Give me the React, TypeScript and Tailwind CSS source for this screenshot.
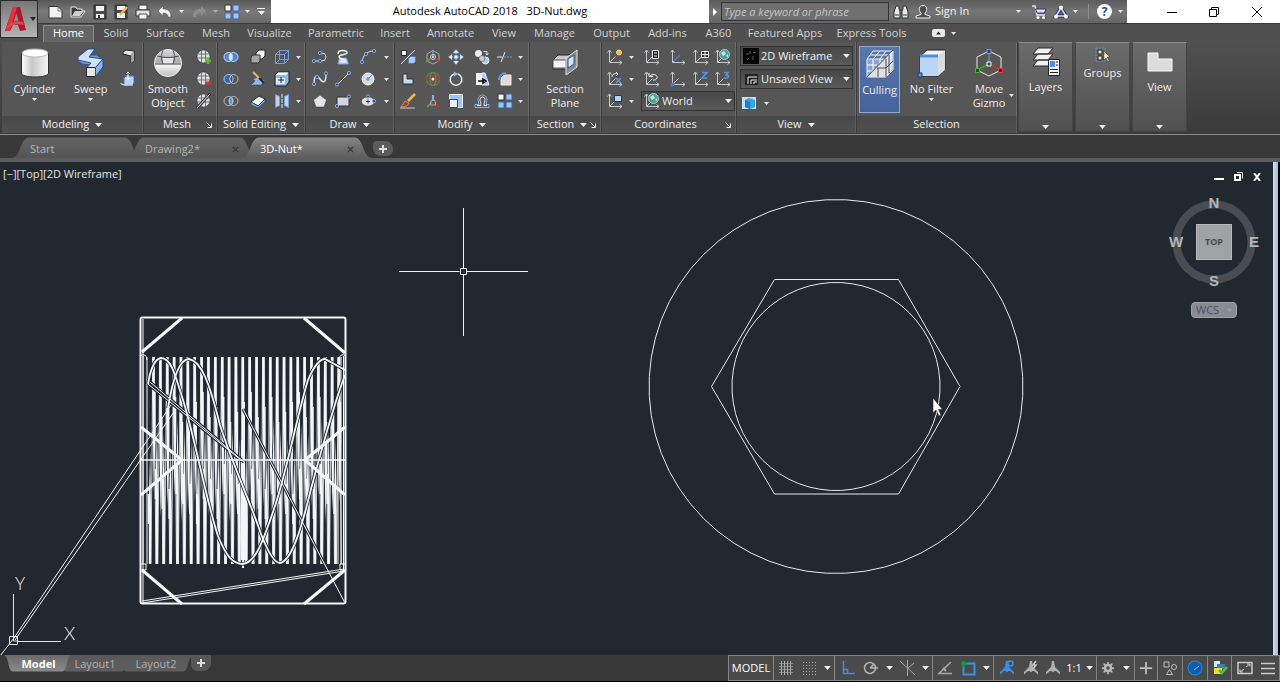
import type { ReactNode } from 'react'

const LIGHT = '#e4e6ea'
const BLUE = '#86b0ee'

/* ---------- shared bits ---------- */

function Caret({ className = '' }: { className?: string }) {
  return (
    <svg width="7" height="4" viewBox="0 0 7 4" className={`shrink-0 ${className}`} aria-hidden="true">
      <path d="M0 0h7L3.5 4z" fill="#f0f0f0" />
    </svg>
  )
}

function SmallCaret({ className = '' }: { className?: string }) {
  return (
    <svg width="5" height="3" viewBox="0 0 5 3" className={`shrink-0 ${className}`} aria-hidden="true">
      <path d="M0 0h5L2.5 3z" fill="#e8e8e8" />
    </svg>
  )
}

function Ico({ children, size = 16 }: { children: ReactNode; size?: number }) {
  return (
    <svg width={size} height={size} viewBox="0 0 16 16" fill="none" className="shrink-0" aria-hidden="true">
      {children}
    </svg>
  )
}

function Tool({ label, children }: { label: string; children: ReactNode }) {
  return (
    <button type="button" aria-label={label} className="flex h-[22px] items-center justify-center hover:brightness-125">
      {children}
    </button>
  )
}

function MoreTool({ label }: { label: string }) {
  return (
    <Tool label={label}>
      <SmallCaret />
    </Tool>
  )
}

/* ---------- small ribbon icons ---------- */

function Axes({ children }: { children?: ReactNode }) {
  return (
    <Ico>
      <path d="M2.500 1v12.500H15M0.500 3.500L2.500 1l2 2.500M12.500 11.500l2.500 2-2.500 2M2.500 13.500l6-6" stroke="#c6c8cc" />
      {children}
    </Ico>
  )
}

function MeshBall({ children }: { children?: ReactNode }) {
  return (
    <Ico>
      <circle cx="7.500" cy="7.500" r="6.500" fill="#dcdee2" stroke="#2b2b2b" strokeWidth="0.500" />
      <path d="M2 5h11M1.500 9h12M5.500 1.500v12M9.500 1.500v12" stroke="#5b5e64" strokeWidth="0.800" />
      {children}
    </Ico>
  )
}

function Node({ x, y }: { x: number; y: number }) {
  return <circle cx={x} cy={y} r="1.600" fill="#2a4a7c" stroke={BLUE} />
}

const icons = {
  polysolid: (
    <Ico>
      <path d="M3 3l3-2 8 1v10l-3 2V7L3 5z" fill={LIGHT} stroke="#222" />
      <path d="M11 5l3-3v10l-3 2z" fill="#9fa3aa" />
    </Ico>
  ),
  presspull: (
    <Ico>
      <path d="M4 7l2-2h8v7l-2 2H4z" fill="#b8d4f6" stroke="#4b76b5" />
      <path d="M8 9V1M6 3l2-2 2 2M0.500 12.500L4 14h9" stroke="#fff" />
    </Ico>
  ),
  meshMore: (
    <MeshBall>
      <path d="M9 12h6M12 9v6" stroke="#5fbf2f" strokeWidth="2.500" />
    </MeshBall>
  ),
  meshLess: (
    <MeshBall>
      <path d="M9 12h6" stroke="#d8322c" strokeWidth="3" />
    </MeshBall>
  ),
  meshRefine: (
    <MeshBall>
      <path d="M1 15L14 1" stroke="#444" strokeWidth="3" />
      <path d="M1 15L14 1" stroke="#ddd" />
    </MeshBall>
  ),
  union: (
    <Ico>
      <circle cx="5.500" cy="8" r="4.500" fill="#4f86d4" stroke="#c5dcfa" />
      <circle cx="10.500" cy="8" r="4.500" fill="#4f86d4" stroke="#c5dcfa" />
      <ellipse cx="8" cy="8" rx="1.800" ry="3.500" fill="#dcebff" />
    </Ico>
  ),
  subtract: (
    <Ico>
      <circle cx="10.500" cy="8" r="4.500" stroke="#b9b9b9" />
      <circle cx="5.500" cy="8" r="4.500" fill="#3466b4" stroke="#a9caf5" />
      <path d="M8.500 4.500a4.500 4.500 0 0 0 0 7" stroke="#ddd" fill="#333" />
    </Ico>
  ),
  intersect: (
    <Ico>
      <circle cx="5.500" cy="8" r="4.500" stroke="#b9b9b9" />
      <circle cx="10.500" cy="8" r="4.500" stroke="#b9b9b9" />
      <ellipse cx="8" cy="8" rx="1.800" ry="3.500" fill="#5b93e0" stroke="#a9caf5" />
    </Ico>
  ),
  extrudeFace: (
    <Ico>
      <path d="M6 4l3-3h6v6l-3 3H6z" fill="#f3f3f3" stroke="#222" />
      <path d="M1 8l2-2h7v6l-2 2H1z" fill="#a2a5aa" stroke="#333" />
    </Ico>
  ),
  slice: (
    <Ico>
      <path d="M1 14l4-4-2-2 5-2 7 4-4 4z" fill="#8fb8ec" stroke="#345" strokeWidth="0.500" />
      <path d="M3 1l7 7" stroke="#e8b25c" strokeWidth="2" />
      <path d="M9 7l5 5" stroke="#222" strokeWidth="2" />
    </Ico>
  ),
  thicken: (
    <Ico>
      <path d="M1 9l8-6 6 3-7 7z" fill="#f4f6f9" stroke="#222" />
      <path d="M1 9l7 4 7-7v3l-7 6-7-3z" fill="#77a9e8" stroke="#222" strokeWidth="0.500" />
    </Ico>
  ),
  wireCube: (
    <Ico>
      <path d="M1.500 5.500h9v9h-9zM5.500 1.500h9v9h-9zM1.500 5.500l4-4M10.500 5.500l4-4M1.500 14.500l4-4M10.500 14.500l4-4" stroke="#6f9fe2" />
    </Ico>
  ),
  shell: (
    <Ico>
      <path d="M1 4l3-3h11v10l-3 4H1z" fill="#8fb8ec" stroke="#222" />
      <path d="M1.500 4l3-2.500h10L12 4z" fill="#fff" />
      <path d="M2 7h9v6H2z" fill="#dbe9fb" />
      <path d="M4 9h6M7 6v6" stroke="#222" />
    </Ico>
  ),
  separate: (
    <Ico>
      <path d="M1.500 1.500l4 2v9l-4 2zM14.500 1.500l-4 2v9l4 2z" fill="#b8d4f6" stroke="#6f9fe2" />
      <path d="M8 1v14" stroke="#eee" strokeDasharray="4 1" />
    </Ico>
  ),
  polyline: (
    <Ico>
      <path d="M2 12h8a4 4 0 0 0 0-8H8" stroke={LIGHT} />
      <Node x={2} y={12} />
      <Node x={8} y={12} />
      <Node x={8} y={4} />
    </Ico>
  ),
  helix: (
    <Ico>
      <path d="M3 15l1.500-6h7l2 6z" fill="#c5dcfa" stroke="#6d9fe0" />
      <path d="M3 5c0-5 9-4 9-1 0 2-8 1-8 4 0 2 6 2 6 4 0 1-3 1-4 0" stroke="#f2f2f2" strokeWidth="1.500" />
    </Ico>
  ),
  arc: (
    <Ico>
      <path d="M2 13C3 6 7 2 14 2" stroke={LIGHT} />
      <Node x={2} y={13} />
      <Node x={6} y={5} />
      <Node x={14} y={2} />
    </Ico>
  ),
  spline: (
    <Ico>
      <path d="M2 13C2 2 6 5 8 8s6 6 6-5" stroke={LIGHT} strokeWidth="1.500" />
      <Node x={2} y={13} />
      <Node x={5} y={6} />
      <Node x={14} y={2.5} />
    </Ico>
  ),
  line: (
    <Ico>
      <path d="M2 14L14 2" stroke={LIGHT} />
      <Node x={2} y={13.5} />
      <Node x={14} y={2} />
    </Ico>
  ),
  circle: (
    <Ico>
      <circle cx="8" cy="8" r="6" fill="#d8dbe0" stroke="#f8f8f8" />
      <path d="M8 8l4-4" stroke="#4b80cc" />
      <circle cx="8" cy="8" r="1.500" fill="#7da8e6" stroke="#4b80cc" strokeWidth="0.500" />
    </Ico>
  ),
  polygon: (
    <Ico>
      <path d="M8 2l6.500 5-2.500 7H4L1.500 7z" fill="#e2e3e6" stroke="#333" strokeWidth="0.500" />
    </Ico>
  ),
  rectangle: (
    <Ico>
      <path d="M2 4h12v9H2z" fill="#d3d6da" stroke="#333" />
      <Node x={2} y={13} />
      <Node x={14} y={3.5} />
    </Ico>
  ),
  ellipse: (
    <Ico>
      <ellipse cx="8" cy="8.500" rx="6.500" ry="4.500" fill="#e0e2e6" stroke="#333" strokeWidth="0.500" />
      <path d="M6 8.500h4M8 6.500v4" stroke="#333" />
      <Node x={8} y={3.5} />
      <Node x={14} y={8} />
    </Ico>
  ),
  align3d: (
    <Ico>
      <path d="M1 15L15 1" stroke={LIGHT} />
      <path d="M1.500 1.500h5v5h-5z" fill="#f5f5f5" stroke="#222" />
      <path d="M8.500 9.500l2-2h5v5l-2 2h-5z" fill="#a9cbf6" stroke="#4b76b5" />
    </Ico>
  ),
  gizmoMove: (
    <Ico>
      <path d="M8 1.500l6 3.500v7l-6 3-6-3V5z" stroke="#a8a8a8" />
      <path d="M8 8V1" stroke={BLUE} />
      <path d="M5 10l-4 3" stroke="#4ca23c" strokeWidth="2" />
      <path d="M11 10l4 3" stroke="#c4352c" strokeWidth="2" />
      <circle cx="8" cy="8" r="2.500" stroke="#ccc" />
      <circle cx="8" cy="8" r="1" fill="#eee" />
    </Ico>
  ),
  move: (
    <Ico>
      <path d="M8 3v10M3 8h10" stroke={LIGHT} strokeDasharray="2 1" />
      <path d="M5 4L8 0.500 11 4zM5 12l3 3.500 3-3.500zM4 5L0.500 8 4 11zM12 5l3.500 3-3.500 3z" fill="#f3f3f3" stroke="#7099d4" strokeWidth="0.500" />
      <rect x="6" y="6" width="4" height="4" fill="#fff" stroke="#4b76b5" />
    </Ico>
  ),
  copy: (
    <Ico>
      <circle cx="4.500" cy="4.500" r="3.500" fill="#eee" />
      <circle cx="11.500" cy="11.500" r="3.500" fill="#a9cbf6" stroke="#e5f0ff" />
      <circle cx="8" cy="9.500" r="3" fill="#c8ccd2" stroke="#444" strokeWidth="0.500" />
      <path d="M9.500 2.500H13V6M11.500 4.500L13 6l1.500-1.500" stroke={LIGHT} />
    </Ico>
  ),
  trim: (
    <Ico>
      <path d="M0 8h5" stroke={LIGHT} />
      <path d="M7 8h9" stroke="#6f9fe2" strokeDasharray="2 1" />
      <path d="M4 13L8 3" stroke={LIGHT} />
    </Ico>
  ),
  extrudeL: (
    <Ico>
      <path d="M3 3h4v5h6v5H3z" fill="#c8dcf6" stroke="#333" />
    </Ico>
  ),
  gizmoRotate: (
    <Ico>
      <circle cx="8" cy="8" r="6.500" stroke="#5f9d4c" />
      <ellipse cx="8" cy="8" rx="6.500" ry="3" stroke="#c4352c" strokeWidth="1.500" />
      <ellipse cx="8" cy="8" rx="3" ry="6.500" stroke="#4aa246" />
      <circle cx="8" cy="8" r="1.500" fill="#e8e8e8" />
    </Ico>
  ),
  rotate: (
    <Ico>
      <path d="M6 3a5.800 5.800 0 1 0 4 0" stroke={LIGHT} strokeWidth="1.500" />
      <path d="M6 0.500L10.500 3 6 5.500z" fill="#8fb6ef" />
    </Ico>
  ),
  stretch: (
    <Ico>
      <path d="M2 2h6v12H2z" fill="#f5f5f5" />
      <path d="M8 2h3l4 12H8z" fill="#a9cbf6" stroke="#e5f0ff" />
      <path d="M4 10h6M9 8l3 2-3 2z" stroke="#111" strokeWidth="1.500" />
    </Ico>
  ),
  fillet: (
    <Ico>
      <path d="M4 14V9a5 5 0 0 1 5-5h5v10z" fill="#ddd" stroke="#eee" />
      <path d="M2 9a7 7 0 0 1 7-7" stroke="#5b93e0" strokeWidth="2" />
    </Ico>
  ),
  erase: (
    <Ico>
      <path d="M0 15h15" stroke="#ccc" />
      <path d="M8 8l7-7" stroke="#f2ba4c" strokeWidth="2.500" />
      <path d="M1 14l4-6 4 2c-1 3-4 4-8 4z" fill="#a5431f" stroke="#f1d49d" strokeWidth="0.500" />
    </Ico>
  ),
  gizmoScale: (
    <Ico>
      <path d="M8 8V2" stroke={BLUE} strokeWidth="2" />
      <path d="M7 9l-5 5" stroke="#4ca23c" strokeWidth="2" />
      <path d="M9 9l5 5" stroke="#c4352c" strokeWidth="2" />
      <path d="M5.500 9L8 5.500 10.500 9v3h-5z" stroke="#aaa" />
    </Ico>
  ),
  scale: (
    <Ico>
      <path d="M1.500 1.500h13v13h-13z" fill="#9ec4f4" stroke="#f5f5f5" />
      <path d="M1.500 6.500h8v8h-8z" fill="#eceef1" stroke="#2c4a78" />
    </Ico>
  ),
  offset: (
    <Ico>
      <path d="M1 14.500h14v-3h-3c0-2 1-3 1-5a4.500 4.500 0 0 0-9 0c0 2 1 3 1 5H1z" stroke={BLUE} />
      <path d="M3 12.500h4c0-3-1-4-1-6a2.500 2.500 0 0 1 5 0c0 2-1 3-1 6h3" stroke={LIGHT} />
    </Ico>
  ),
  array: (
    <Ico>
      <path d="M1 1h6v6H1z" fill="#f5f5f5" stroke="#333" />
      <path d="M9 1h6v6H9zM1 9h6v6H1zM9 9h6v6H9z" fill="#9ec4f4" stroke="#3c64a0" />
    </Ico>
  ),
  globe: (
    <Axes>
      <circle cx="9.500" cy="5.500" r="5" fill="#4f9f98" stroke="#9fd3ca" />
      <path d="M6 4l3-2 2 3-3 2zM11 7l2-2v3z" fill="#c7e6dc" />
    </Axes>
  ),
}

/* ---------- large ribbon icons ---------- */

function CylinderIcon() {
  return (
    <svg width="30" height="30" viewBox="0 0 30 30" aria-hidden="true">
      <defs>
        <linearGradient id="cyl">
          <stop offset="0" stopColor="#fff" />
          <stop offset="0.400" stopColor="#c7c7ca" />
          <stop offset="1" stopColor="#f6f6f6" />
        </linearGradient>
      </defs>
      <path d="M1.500 5v20c0 2.500 6 4 13.500 4s13.500-1.500 13.500-4V5z" fill="url(#cyl)" stroke="#2d2d2d" />
      <ellipse cx="15" cy="5" rx="13" ry="4" fill="#fff" stroke="#bbb" />
    </svg>
  )
}

function SweepIcon() {
  return (
    <svg width="30" height="30" viewBox="0 0 30 30" aria-hidden="true">
      <path d="M2 10L12 1h7l-5 6h7l6 5v7l-7 9h-9v-9l4-2-9-1-4-3z" fill="#6d9fe0" stroke="#24508f" />
      <path d="M2 9L12 1h7l-6 8 14 2-7 8.500h-9L15 15 2 12z" fill="#d0e1f8" stroke="#24508f" />
      <path d="M10.500 19.500h9v9h-9z" fill="#e8e8e8" stroke="#222" />
      <path d="M19.500 19.500L27 11v8l-7.500 9.500z" fill="#8ab4ec" stroke="#24508f" />
    </svg>
  )
}

function SmoothIcon() {
  return (
    <svg width="30" height="30" viewBox="0 0 30 30" aria-hidden="true">
      <defs>
        <linearGradient id="ball" x1="0" y1="0" x2="0" y2="1">
          <stop offset="0" stopColor="#d9d9d9" />
          <stop offset="0.450" stopColor="#a9abae" />
          <stop offset="0.600" stopColor="#f4f4f4" />
          <stop offset="1" stopColor="#b9b9b9" />
        </linearGradient>
      </defs>
      <circle cx="15" cy="15" r="13.500" fill="url(#ball)" stroke="#f1f1f1" />
      <path d="M2 16h26M4 8c6 2 16 2 22 0M10 2c-2 5-2 9 0 14M20 2c2 5 2 9 0 14" stroke="#4c4e52" fill="none" />
      <path d="M10 10h10v5H10z" fill="#e9e9e9" />
    </svg>
  )
}

function SectionIcon() {
  return (
    <svg width="30" height="30" viewBox="0 0 30 30" aria-hidden="true">
      <path d="M3 12l5-5h12v10l-4 4H3z" fill="#c9cbce" stroke="#222" />
      <path d="M3 12h13v8H3z" fill="#f6f6f6" stroke="#555" />
      <path d="M16 10L27 2v17l-11 8z" fill="#8f98a4" fillOpacity="0.800" stroke="#e1e1e1" />
      <path d="M18 11l6-4v9l-6 4z" fill="#d6e5f8" stroke="#2c568f" />
    </svg>
  )
}

function CullingIcon() {
  return (
    <svg width="30" height="30" viewBox="0 0 30 30" aria-hidden="true">
      <path d="M2 10h19v18H2zM8 2h20v19l-7 7V10l7-8" fill="#8aa5ce" stroke="#eef4ff" />
      <path d="M2 28L27 2v19l-6 7z" fill="#dfe1e5" />
      <path d="M2 16h10M2 22h6M8 10v12M15 10v5M2 10l6-8M8 10l7-8M15 10l6-8M21 10l7-8M5 6h18" stroke="#fff" fill="none" />
      <path d="M2 28L28 1M21 10v18M12 19h9l7-7M24 6v18M13 19v9" stroke="#4b4f58" fill="none" />
    </svg>
  )
}

function FilterIcon() {
  return (
    <svg width="30" height="30" viewBox="0 0 30 30" aria-hidden="true">
      <path d="M3 8l7-6h18v20l-7 6H3z" fill="#f3f3f3" stroke="#222" />
      <path d="M3 8h18v20H3z" fill="#b9d6f5" />
      <path d="M21 8l7-6v20l-7 6z" fill="#d9dbdf" />
      <path d="M3 8h18" stroke="#4f8ee6" strokeWidth="3" />
      <path d="M1 25h4v4H1z" fill="#5b93e0" stroke="#1e3c6a" />
    </svg>
  )
}

function GizmoIcon() {
  return (
    <svg width="30" height="30" viewBox="0 0 30 30" fill="none" aria-hidden="true">
      <path d="M15 3l12 6v13l-12 6-12-6V9z" stroke="#e6e6e6" />
      <path d="M15 16V3" stroke="#6f9fe2" />
      <path d="M15 16L3 22" stroke="#3fa535" strokeWidth="1.500" />
      <path d="M15 16l12 6" stroke="#c4352c" strokeWidth="1.500" />
      <path d="M13 1.500h4v4h-4z" fill="#29436e" stroke="#6f9fe2" />
      <path d="M1.500 20.500h4v4h-4z" fill="#264a22" stroke="#47b13c" />
      <path d="M24.500 20.500h4v4h-4z" fill="#571d1a" stroke="#d0483f" />
      <path d="M13 14h4v4h-4z" fill="#444" stroke="#fff" />
    </svg>
  )
}

function LayersIcon() {
  return (
    <svg width="30" height="30" viewBox="0 0 30 30" aria-hidden="true">
      <path d="M2 19l5-6h15l-5 6zM2 13l5-6h15l-5 6zM2 7l5-6h15l-5 6z" fill="#f2f2f2" stroke="#2b2b2b" />
      <path d="M17.500 12.500h11v16h-11z" fill="#f4f4f4" stroke="#222" />
      <path d="M19 14h5v6h-5z" fill="#4f8ee6" />
      <path d="M25 15h2M25 18h2M19 22.500h8M19 25.500h8" stroke="#222" />
    </svg>
  )
}

/* ---------- ribbon ---------- */

function BigTool({ label, lines, icon, caret, className = '' }: { label: string; lines: string[]; icon: ReactNode; caret?: boolean; className?: string }) {
  return (
    <button type="button" aria-label={label} className={`flex flex-col items-center pt-0.5 leading-[14px] ${className}`}>
      {icon}
      <span className="mt-1 flex flex-col whitespace-nowrap text-center">
        {lines.map((line) => (
          <span key={line}>{line}</span>
        ))}
      </span>
      {caret && <SmallCaret className="mt-0.5" />}
    </button>
  )
}

function Panel({ title, width, caret, launcher, children }: { title: string; width: string; caret?: boolean; launcher?: boolean; children: ReactNode }) {
  return (
    <section aria-label={title} className={`flex shrink-0 flex-col border-r border-[#3d3d3d] ${width}`}>
      <div className="h-[74px] border-r border-[#6a6a6a] bg-[#565656] pt-1">{children}</div>
      <div className="flex h-[17px] items-center border-r border-[#5c5c5c] bg-linear-to-b from-[#484848] to-[#505050] px-1">
        <button type="button" className="flex flex-1 items-center justify-center gap-1.5 whitespace-nowrap">
          {title}
          {caret && <Caret />}
        </button>
        {launcher && (
          <button type="button" aria-label={`${title} settings`}>
            <svg width="6" height="6" viewBox="0 0 6 6" fill="none" aria-hidden="true">
              <path d="M0.500 0.500L5 5M5.500 1.500v4h-4" stroke="#eee" />
            </svg>
          </button>
        )}
      </div>
    </section>
  )
}

function MiniPanel({ title, icon }: { title: string; icon: ReactNode }) {
  return (
    <section className="mr-0.5 flex h-[90px] w-[55px] shrink-0 flex-col items-center border border-t-[#8a8a8a] border-r-[#444] border-b-[#444] border-l-[#444] bg-linear-to-b from-[#6b6b6b] to-[#505050]">
      <button type="button" className="flex h-full w-full flex-col items-center gap-[3px] pt-1 leading-[14px]">
        {icon}
        <span>{title}</span>
        <Caret className="mt-auto mb-0.5" />
      </button>
    </section>
  )
}

function Combo({ label, value, icon, className = '' }: { label: string; value: string; icon: ReactNode; className?: string }) {
  return (
    <div className={`flex h-5 items-center gap-0.5 border border-[#333] bg-linear-to-b from-[#474747] to-[#5a5a5a] px-0.5 ${className}`}>
      {icon}
      <select aria-label={label} className="min-w-0 flex-1 appearance-none bg-transparent outline-none">
        <option>{value}</option>
      </select>
      <Caret />
    </div>
  )
}

function Ribbon() {
  return (
    <div className="flex h-[93px] border-b border-[#8c8c8c] bg-linear-to-b from-[#505050] to-[#3a3a3a] pl-0.5">
      <Panel title="Modeling" width="w-[142px]" caret>
        <div className="flex">
          <BigTool label="Cylinder" lines={['Cylinder']} icon={<CylinderIcon />} caret className="w-[66px]" />
          <BigTool label="Sweep" lines={['Sweep']} icon={<SweepIcon />} caret className="w-12" />
          <div className="flex w-7 flex-col">
            <Tool label="Polysolid">{icons.polysolid}</Tool>
            <Tool label="Presspull">{icons.presspull}</Tool>
          </div>
        </div>
      </Panel>
      <Panel title="Mesh" width="w-[74px]" launcher>
        <div className="flex">
          <BigTool label="Smooth Object" lines={['Smooth', 'Object']} icon={<SmoothIcon />} className="w-12" />
          <div className="flex w-6 flex-col">
            <Tool label="Smooth More">{icons.meshMore}</Tool>
            <Tool label="Smooth Less">{icons.meshLess}</Tool>
            <Tool label="Refine Mesh">{icons.meshRefine}</Tool>
          </div>
        </div>
      </Panel>
      <Panel title="Solid Editing" width="w-[88px]" caret>
        <div className="grid grid-cols-[26px_28px_20px_12px]">
          <Tool label="Union">{icons.union}</Tool>
          <Tool label="Extrude Faces">{icons.extrudeFace}</Tool>
          <Tool label="Extract Edges">{icons.wireCube}</Tool>
          <MoreTool label="More edge tools" />
          <Tool label="Subtract">{icons.subtract}</Tool>
          <Tool label="Slice">{icons.slice}</Tool>
          <Tool label="Shell">{icons.shell}</Tool>
          <MoreTool label="More body tools" />
          <Tool label="Intersect">{icons.intersect}</Tool>
          <Tool label="Thicken">{icons.thicken}</Tool>
          <Tool label="Separate">{icons.separate}</Tool>
          <MoreTool label="More separate tools" />
        </div>
      </Panel>
      <Panel title="Draw" width="w-[89px]" caret>
        <div className="grid grid-cols-[28px_18px_32px_4px]">
          <Tool label="Polyline">{icons.polyline}</Tool>
          <Tool label="Helix">{icons.helix}</Tool>
          <Tool label="Arc">{icons.arc}</Tool>
          <MoreTool label="More arcs" />
          <Tool label="Spline">{icons.spline}</Tool>
          <Tool label="Line">{icons.line}</Tool>
          <Tool label="Circle">{icons.circle}</Tool>
          <MoreTool label="More circles" />
          <Tool label="Polygon">{icons.polygon}</Tool>
          <Tool label="Rectangle">{icons.rectangle}</Tool>
          <Tool label="Ellipse">{icons.ellipse}</Tool>
          <MoreTool label="More ellipses" />
        </div>
      </Panel>
      <Panel title="Modify" width="w-[135px]" caret>
        <div className="grid grid-cols-[26px_24px_22px_30px_16px_15px]">
          <Tool label="3D Align">{icons.align3d}</Tool>
          <Tool label="3D Move">{icons.gizmoMove}</Tool>
          <Tool label="Move">{icons.move}</Tool>
          <Tool label="Copy">{icons.copy}</Tool>
          <Tool label="Trim">{icons.trim}</Tool>
          <MoreTool label="More trim tools" />
          <Tool label="3D Mirror">{icons.extrudeL}</Tool>
          <Tool label="3D Rotate">{icons.gizmoRotate}</Tool>
          <Tool label="Rotate">{icons.rotate}</Tool>
          <Tool label="Stretch">{icons.stretch}</Tool>
          <Tool label="Fillet">{icons.fillet}</Tool>
          <MoreTool label="More fillet tools" />
          <Tool label="Erase">{icons.erase}</Tool>
          <Tool label="3D Scale">{icons.gizmoScale}</Tool>
          <Tool label="Scale">{icons.scale}</Tool>
          <Tool label="Offset">{icons.offset}</Tool>
          <Tool label="Array">{icons.array}</Tool>
          <MoreTool label="More array tools" />
        </div>
      </Panel>
      <Panel title="Section" width="w-[72px]" caret launcher>
        <BigTool label="Section Plane" lines={['Section', 'Plane']} icon={<SectionIcon />} className="w-full" />
      </Panel>
      <Panel title="Coordinates" width="w-[135px]" launcher>
        <div className="grid grid-cols-[26px_6px_36px_16px_30px_14px]">
          <Tool label="UCS">
            <Axes>
              <circle cx="12" cy="3.500" r="2.500" fill="#ffb52e" stroke="#ffe2a1" />
            </Axes>
          </Tool>
          <MoreTool label="More UCS tools" />
          <Tool label="Named UCS">
            <Axes>
              <path d="M8.500 1.500h6v8h-6z" fill="#222" stroke="#eee" />
              <path d="M10 4h3M10 7h3" stroke="#eee" />
            </Axes>
          </Tool>
          <Tool label="Origin">
            <Axes>
              <path d="M4 12l6-6" stroke="#4b80cc" strokeWidth="1.500" />
            </Axes>
          </Tool>
          <Tool label="UCS Icon">
            <Axes>
              <path d="M8.500 2.500h7v6h-7z" fill="#333" stroke="#f2f2f2" />
              <path d="M12 3v5M9 5.500h6" stroke="#f2f2f2" />
            </Axes>
          </Tool>
          <Tool label="World UCS">{icons.globe}</Tool>
          <Tool label="Rotate X">
            <Axes>
              <path d="M5 6c0-3 3-4 5-3M9 1l2 2-2 2" stroke="#f3f3f3" />
              <path d="M9 7l5 5M14 7l-5 5" stroke="#5b93e0" strokeWidth="1.500" />
            </Axes>
          </Tool>
          <MoreTool label="More rotate tools" />
          <Tool label="Previous UCS">
            <Axes>
              <path d="M6 5c3-3 8-1 7 2-1 2-2 2-4 2M5 2v3.500h4" stroke="#f3f3f3" />
            </Axes>
          </Tool>
          <Tool label="Face UCS">
            <Axes>
              <path d="M1 15l3-3" stroke="#4b80cc" strokeWidth="3" />
            </Axes>
          </Tool>
          <Tool label="Z-Axis Vector">
            <Axes>
              <path d="M9 1.500h5L9 7h5" stroke="#5b93e0" strokeWidth="1.500" />
            </Axes>
          </Tool>
          <Tool label="3 Point">
            <Axes>
              <path d="M9 1.500h4L11 4c4 0 3 4-2 3" stroke="#5b93e0" strokeWidth="1.500" />
            </Axes>
          </Tool>
          <Tool label="View UCS">
            <Axes>
              <path d="M7.500 2.500h7v6h-7z" fill="#b9d6f5" stroke="#1d3a66" />
            </Axes>
          </Tool>
          <MoreTool label="More view tools" />
          <Combo label="Current UCS" value="World" icon={icons.globe} className="col-span-4 mt-px ml-[7px] w-[94px]" />
        </div>
      </Panel>
      <Panel title="View" width="w-[120px]" caret>
        <div className="flex flex-col gap-[3px] pr-0.5 pl-[3px]">
          <Combo
            label="Visual style"
            value="2D Wireframe"
            icon={
              <Ico>
                <rect width="16" height="16" fill="#050505" />
                <path d="M3 6h3M7 3v3M10 5l3-1M4 12l2-2M10 8v4" stroke="#5c5c5c" />
              </Ico>
            }
          />
          <Combo
            label="Saved view"
            value="Unsaved View"
            icon={
              <Ico>
                <path d="M2 3h13v11H2z" fill="#222" />
                <path d="M5 13V6h9M8 13V9h6M11 13v-2h3" stroke="#eee" />
              </Ico>
            }
          />
          <button type="button" aria-label="3D view" className="flex h-[22px] items-center gap-1.5 pl-0.5">
            <Ico>
              <path d="M0 2h14v12H0z" fill="#bfe2f7" />
              <path d="M3 5l4-2 6 2v7l-5 2-5-2z" fill="#3ba3dd" />
              <path d="M3 5l5 2v7l-5-2z" fill="#1f7fc0" />
            </Ico>
            <SmallCaret />
          </button>
        </div>
      </Panel>
      <Panel title="Selection" width="w-[161px]">
        <div className="flex items-start">
          <BigTool label="Culling" lines={['Culling']} icon={<CullingIcon />} className="ml-0.5 h-[67px] w-[41px] border border-[#8fa9d4] bg-linear-to-b from-[#5877ad] to-[#44639b]" />
          <BigTool label="No Filter" lines={['No Filter']} icon={<FilterIcon />} caret className="w-[63px]" />
          <BigTool label="Move Gizmo" lines={['Move', 'Gizmo']} icon={<GizmoIcon />} className="w-[52px]" />
          <button type="button" aria-label="Gizmo options" className="-ml-1.5 flex h-4 items-center self-center pt-8">
            <SmallCaret />
          </button>
        </div>
      </Panel>
      <MiniPanel title="Layers" icon={<LayersIcon />} />
      <MiniPanel
        title="Groups"
        icon={
          <Ico>
            <path d="M1 1h9v13H1z" stroke="#5b93e0" strokeDasharray="2 1" />
            <path d="M3 3h4v4H3zM3 9h4v4H3z" fill="#e9e9a4" stroke="#222" />
            <path d="M9 4v9l2-2 2 4 1-1-2-4h3z" fill="#f7f6c0" stroke="#333" strokeWidth="0.500" />
          </Ico>
        }
      />
      <MiniPanel
        title="View"
        icon={
          <svg width="30" height="30" viewBox="0 0 30 30" aria-hidden="true">
            <path d="M3 6h10v6h14v12H3z" fill="#dcdcdc" stroke="#fafafa" />
          </svg>
        }
      />
    </div>
  )
}

/* ---------- title bar ---------- */

function QuickAccess() {
  const btn = 'flex w-[22px] justify-center'
  return (
    <div className="flex h-[23px] w-[233px] shrink-0 items-center bg-linear-to-b from-[#585858] via-[#7a7a7a] to-[#6a6a6a] pl-[7px]">
      <button type="button" aria-label="New" className={btn}>
        <Ico><path d="M1 2.500h9l4 4V14H1z" fill="#f2f2f2" stroke="#333" /><path d="M10 3v4h4" stroke="#777" /></Ico>
      </button>
      <button type="button" aria-label="Open" className={btn}>
        <Ico><path d="M1 13V3h5l1 2h5v2h3l-4 6z" fill="#3a3a3a" stroke="#e8e8e8" /><path d="M2 12l3-5h9l-4 5z" fill="#cfcfcf" /></Ico>
      </button>
      <button type="button" aria-label="Save" className={btn}>
        <Ico><path d="M2 1h12v14H2z" fill="#4a4a4a" stroke="#2a2a2a" /><path d="M4 2h8v5H4zM4 10h8v4H4z" fill="#f4f4f4" /><path d="M6 11h2v3H6z" fill="#333" /></Ico>
      </button>
      <button type="button" aria-label="Save As" className={btn}>
        <Ico><path d="M2 1h12v14H2z" fill="#4a4a4a" stroke="#2a2a2a" /><path d="M4 2h8v4H4zM4 9h8v5H4z" fill="#f4f4f4" /><path d="M7 11l7-8" stroke="#f2ba4c" strokeWidth="2.500" /></Ico>
      </button>
      <button type="button" aria-label="Plot" className={btn}>
        <Ico><path d="M4 1h8v5H4z" fill="#fff" stroke="#333" /><path d="M1 6h14v6H1z" fill="#e4e4e4" stroke="#333" /><path d="M4 10h8v5H4z" fill="#fafafa" stroke="#555" /></Ico>
      </button>
      <button type="button" aria-label="Undo" className={btn}>
        <Ico><path d="M1 7l5-5v3c5 0 8 2 8 8h-3c0-3-2-4-5-4v3z" fill="#f4f4f4" stroke="#444" strokeWidth="0.500" /></Ico>
      </button>
      <button type="button" aria-label="Undo list" className="flex w-3 justify-center"><SmallCaret /></button>
      <button type="button" aria-label="Redo" className={btn}>
        <Ico><path d="M15 7l-5-5v3c-5 0-8 2-8 8h3c0-3 2-4 5-4v3z" fill="#8d8d8d" /></Ico>
      </button>
      <button type="button" aria-label="Redo list" className="flex w-3 justify-center opacity-50"><SmallCaret /></button>
      <button type="button" aria-label="Workspace" className={btn}>{icons.array}</button>
      <button type="button" aria-label="Workspace list" className="flex w-2 justify-center"><SmallCaret /></button>
      <button type="button" aria-label="Customize toolbar" className="flex w-5 flex-col items-center gap-0.5">
        <span className="h-px w-2 bg-white" />
        <Caret />
      </button>
    </div>
  )
}

function InfoCenter() {
  return (
    <div className="flex h-[23px] w-[418px] shrink-0 items-center bg-linear-to-b from-[#5c5c5c] via-[#757575] to-[#666]">
      <button type="button" aria-label="Collapse search" className="flex h-full w-3 items-center justify-center">
        <svg width="4" height="8" viewBox="0 0 4 8" aria-hidden="true"><path d="M0 0l4 4-4 4z" fill="#fff" /></svg>
      </button>
      <input aria-label="Search" placeholder="Type a keyword or phrase" className="h-[19px] w-[168px] border border-[#333] bg-[#6f6f6f] px-0.5 italic outline-none placeholder:text-[#c4c4c4]" />
      <button type="button" aria-label="Find" className="ml-1">
        <Ico><path d="M3 2h3v3l1 2v7H1V8zM10 2h3l2 6v6H9V7l1-2z" fill="#e8e8e8" stroke="#2a2a2a" /><path d="M2 11h4M10 11h4M7 6h2" stroke="#333" /></Ico>
      </button>
      <button type="button" className="ml-1.5 flex flex-1 items-center gap-1 text-[#f2f2f2]">
        <Ico><path d="M1 14v-2l5-1.500V9C3 6 4 1.500 8 1.500S13 6 10 9v1.500l5 1.500v2z" fill="#4a4a4a" stroke="#f3f3f3" /></Ico>
        Sign In
        <SmallCaret className="mr-2 ml-auto" />
      </button>
      <button type="button" aria-label="App Store" className="mr-1.5 ml-0.5">
        <Ico><path d="M1 2h3l2 9h8" stroke="#dfe4f5" strokeWidth="1.500" /><path d="M4.500 5H15l-1.500 4H6z" fill="#dfe4f5" stroke="#2e3560" /><circle cx="7" cy="13.500" r="1.500" fill="#fff" /><circle cx="12.500" cy="13.500" r="1.500" fill="#fff" /></Ico>
      </button>
      <button type="button" aria-label="Stay connected" className="flex items-center gap-1">
        <Ico><path d="M8 4l-5 8h10z" stroke="#29336b" strokeWidth="3.500" /><path d="M8 4l-5 8h10z" stroke="#dde" strokeWidth="1.500" /><circle cx="8" cy="3.500" r="2" fill="#fff" /><circle cx="3" cy="12.500" r="2" fill="#fff" /><circle cx="13" cy="12.500" r="2" fill="#fff" /></Ico>
        <SmallCaret />
      </button>
      <button type="button" aria-label="Help" className="mr-1 ml-2.5 flex items-center gap-1.5 border-l border-[#8e8e8e] pl-2">
        <span className="flex size-[15px] items-center justify-center rounded-full bg-white text-[12px] leading-3 font-bold text-[#2a4790]">?</span>
        <SmallCaret />
      </button>
    </div>
  )
}

const menuTabs = [
  { name: 'Home', width: 'w-[51px]' },
  { name: 'Solid', width: 'w-11' },
  { name: 'Surface', width: 'w-[55px]' },
  { name: 'Mesh', width: 'w-[46px]' },
  { name: 'Visualize', width: 'w-[61px]' },
  { name: 'Parametric', width: 'w-[72px]' },
  { name: 'Insert', width: 'w-[46px]' },
  { name: 'Annotate', width: 'w-[65px]' },
  { name: 'View', width: 'w-[42px]' },
  { name: 'Manage', width: 'w-[59px]' },
  { name: 'Output', width: 'w-[55px]' },
  { name: 'Add-ins', width: 'w-[57px]' },
  { name: 'A360', width: 'w-[45px]' },
  { name: 'Featured Apps', width: 'w-[88px]' },
  { name: 'Express Tools', width: 'w-[85px]' },
]

function Header() {
  return (
    <header className="flex bg-[#505050]">
      <button type="button" aria-label="Application menu" className="mb-1 flex h-[38px] w-[38px] shrink-0 items-center justify-between border border-[#2b2b2b] bg-linear-to-b from-[#767676] to-[#b5b5b5] pr-px pl-[3px]">
        <svg width="24" height="28" viewBox="0 0 24 28" aria-hidden="true">
          <path d="M9 2h7l6 23-6 1-2-6H9l-3 6H1z" fill="#b3132b" />
          <path d="M9 2h4L6 26H1z" fill="#e0333f" />
          <path d="M12.500 8l-3 9c3-2 4-1 5-1z" fill="#8c8c8c" />
          <path d="M3 21c5-4 9-6 16-4l1 3c-7-2-12 0-17 4z" fill="#d84b52" />
        </svg>
        <svg width="6" height="4" viewBox="0 0 6 4" aria-hidden="true"><path d="M0 0h6L3 4z" fill="#222" /></svg>
      </button>
      <div className="min-w-0 flex-1">
        <div className="flex h-[23px] items-center bg-white">
          <QuickAccess />
          <h1 className="flex-1 text-center whitespace-pre text-black">Autodesk AutoCAD 2018   3D-Nut.dwg</h1>
          <InfoCenter />
          <div className="flex w-[153px] shrink-0 items-center justify-around pr-0.5 pl-6 text-black">
            <button type="button" aria-label="Minimize"><svg width="10" height="10" aria-hidden="true"><path d="M0 5.500h10" stroke="#000" /></svg></button>
            <button type="button" aria-label="Restore"><svg width="10" height="10" fill="none" aria-hidden="true"><path d="M0.500 2.500h7v7h-7zM2.500 2.500v-2h7v7h-2" stroke="#000" /></svg></button>
            <button type="button" aria-label="Close"><svg width="10" height="10" aria-hidden="true"><path d="M0 0l10 10M10 0L0 10" stroke="#000" /></svg></button>
          </div>
        </div>
        <nav className="flex h-[19px] items-end border-t border-[#3a3a3a] pl-[5px] text-[#d0d0d0]" aria-label="Ribbon tabs">
          {menuTabs.map((tab) => (
            <button
              key={tab.name}
              type="button"
              className={`flex h-[17px] shrink-0 items-start justify-center leading-[14px] whitespace-nowrap ${tab.width} ${tab.name === 'Home' ? 'border border-b-0 border-[#8a8a8a] bg-[#656565] text-white' : 'pt-px'}`}
            >
              {tab.name}
            </button>
          ))}
          <button type="button" aria-label="Minimize ribbon" className="mb-0.5 ml-[18px] flex h-[14px] items-center gap-1.5">
            <svg width="13" height="8" viewBox="0 0 13 8" aria-hidden="true"><rect width="13" height="8" rx="2" fill="#e9e9e9" /><path d="M4 5.500h5L6.500 2.500z" fill="#333" /></svg>
            <SmallCaret />
          </button>
        </nav>
      </div>
    </header>
  )
}

/* ---------- document tabs ---------- */

function TabShape({ from, to, flip }: { from: string; to: string; flip?: boolean }) {
  const id = `tab-${from}-${to}`
  return (
    <svg viewBox="0 0 130 21" preserveAspectRatio="none" className={`absolute top-0 -left-2 h-full w-[calc(100%+14px)] ${flip ? '-scale-y-100' : ''}`} aria-hidden="true">
      <defs>
        <linearGradient id={id} x1="0" y1={flip ? '1' : '0'} x2="0" y2={flip ? '0' : '1'}>
          <stop offset="0" stopColor={`#${from}`} />
          <stop offset="1" stopColor={`#${to}`} />
        </linearGradient>
      </defs>
      <path d="M0 21C9 20 8 1 17 0.500H114c8 0.500 8 19 16 20.500z" fill={`url(#${id})`} />
    </svg>
  )
}

function DocTab({ name, active, closable }: { name: string; active?: boolean; closable?: boolean }) {
  return (
    <div className={`relative flex h-[21px] w-[115px] items-center pt-[3px] ${active ? 'z-10 text-white' : 'text-[#b4b4b4]'}`}>
      <TabShape from={active ? '858585' : '646464'} to={active ? '5c5c5c' : '545454'} />
      <button type="button" className="relative flex-1 pl-2.5 text-left">{name}</button>
      {closable && (
        <button type="button" aria-label={`Close ${name}`} className="relative mr-[11px]">
          <svg width="7" height="7" viewBox="0 0 8 8" aria-hidden="true"><path d="M1 1l6 6M7 1L1 7" stroke="#383838" strokeWidth="1.500" /></svg>
        </button>
      )}
    </div>
  )
}

function DocTabs() {
  return (
    <nav aria-label="Open drawings" className="flex h-[27px] items-end border-b-4 border-[#5c5c5c] bg-[#383838] pl-5">
      <DocTab name="Start" />
      <DocTab name="Drawing2*" closable />
      <DocTab name="3D-Nut*" active closable />
      <button type="button" aria-label="New drawing" className="mb-0.5 ml-2 flex h-[15px] w-5 items-center justify-center rounded-tl-sm rounded-tr-lg rounded-br-md rounded-bl-lg bg-[#5c5c5c]">
        <svg width="8" height="8" aria-hidden="true"><path d="M4 0v8M0 4h8" stroke="#ddd" strokeWidth="2" /></svg>
      </button>
    </nav>
  )
}

/* ---------- drawing area ---------- */

function ring(cx: number, cy: number, r: number, count: number) {
  return Array.from({ length: count }, (_, i) => {
    const a = ((i + 0.5) / count) * Math.PI * 2
    return `${(cx + r * Math.cos(a)).toFixed(1)},${(cy + r * Math.sin(a)).toFixed(1)}`
  }).join(' ')
}

const threadPitch = 6.87
const threads = Array.from({ length: 28 }, (_, i) => i)

const helixA = 'M148 384C151 366 155 359 161 358c10 0 14 16 22 42 12 38 23 100 35 136 9 22 15 27 24 28 14 0 22-26 33-58 12-36 23-94 33-126 6-14 11-21 17-21l20 11'
const helixB = 'M168 408C173 377 180 359 189 359c12 2 20 22 31 66 12 38 28 71 41 109 7 18 13 29 19 29 12-2 22-37 31-74 12-45 24-88 34-114'
const chords = 'M148 384l94 77M150 382l94 80M243 409l102 194'

function Bolt() {
  return (
    <g stroke="#f4f6f7" fill="none">
      {/* thread flanks, widest at the crest */}
      {threads.map((i) => {
        const top = 153.5 + i * threadPitch
        const bottom = 150 + i * threadPitch
        const drift = ((i * 5) % 7) * 5
        return (
          <g key={i}>
            <path d={`M${top + 0.8} 357L${top + 1.5} 470L${top + 2.4} 564`} strokeWidth="0.8" />
            <path d={`M${top - 0.8} 357L${top - 1.5} 460L${top - 2.6} 564`} strokeWidth="0.8" />
            <path d={`M${top - 1.2} 357h2.4v${35 + drift}h1v40l-2 60l-1.4-100z`} fill="#f4f6f7" stroke="none" />
            <path d={`M${bottom - 1.2} 564h2.4v-${40 + drift}l-1-75l-1.200 45h-1.200v30h1z`} fill="#f4f6f7" stroke="none" />
          </g>
        )
      })}
      <path d="M143 356v208M147 357v207M341 357v207M338 357v207" />
      <path d="M243 357v211" strokeWidth="2" />
      <path d="M243 440v120" strokeWidth="4" />

      {/* helix paths, cut out of the threads behind them */}
      <g stroke="#212830" strokeWidth="3.5">
        <path d={helixA} />
        <path d={helixB} />
        <path d={chords} strokeWidth="3" />
      </g>
      <path d={helixA} strokeWidth="1.8" />
      <path d={helixB} strokeWidth="1.8" />
      <path d={chords} />

      {/* body outline */}
      <rect x="140.500" y="317.500" width="205" height="286" rx="2" strokeWidth="2" />
      <path d="M143 319v283M343.500 356v215" />
      <path d="M182 318l-40 34M304 318l41 35M142 570l40 34M345 570l-41 34M141 427l41 33-41 35M345 427l-40 33 40 35" strokeWidth="3" />
      <path d="M140 460h206" strokeWidth="1.500" />
      <path d="M140 356q6-4 7 4M346 356q-6-4-7 4M140 564h6v6h-6M346 564h-6v6h6" />
      <path d="M171 405L14 638 0 656M176 409L15 640M142 601l202-32M142 603l202-32" />
    </g>
  )
}

function Viewport() {
  return (
    <main className="relative min-h-[400px] flex-1 overflow-hidden border-r-2 border-black bg-[#212830]">
      <svg className="absolute inset-0 h-full w-full" role="img" aria-label="Drawing of nut and bolt">
        <g transform="translate(0 -162)">
          <Bolt />
          <g fill="none" stroke="#e8ebee">
            <polygon points={ring(836, 386.5, 187, 60)} />
            <polygon points={ring(836, 386.5, 104, 60)} />
            <path d="M711.500 386.500L774.500 279.500h124l61.500 107-61.500 107.500h-124z" />
          </g>
          <path d="M399 271.500h60.500M466.500 271.500h61.500M463.500 208v60.500M463.500 275v61M460.500 268.500h6v6h-6z" stroke="#f2f2f2" fill="none" />
          <path d="M13.500 594v42M18 641.500h43M9.500 636.500h8v8h-8zM13.500 636v5h5" stroke="#e4e4e4" fill="none" />
          <text x="15" y="590" fontSize="17" fontFamily="Lato, sans-serif" fontWeight="300" fill="#f4f4f4">Y</text>
          <text x="64" y="640" fontSize="18" fontFamily="Lato, sans-serif" fontWeight="300" fill="#f4f4f4">X</text>
          <path d="M933 398v15l3-3 3 6 2-1-2.500-5.500h4z" fill="#fff" stroke="#111" strokeWidth="0.500" />
        </g>
      </svg>

      <div className="relative flex items-start justify-between pr-[17px]">
        <div className="flex pt-1 pl-[3px] text-[#e2e2e2]">
          <button type="button">[−]</button>
          <button type="button">[Top]</button>
          <button type="button">[2D Wireframe]</button>
        </div>
        <div className="flex w-[94px] flex-col items-center">
          <div className="flex items-center gap-2.5 self-end pt-2.5">
            <button type="button" aria-label="Minimize drawing"><svg width="10" height="8" aria-hidden="true"><path d="M0 6h10" stroke="#fff" strokeWidth="2" /></svg></button>
            <button type="button" aria-label="Restore drawing"><svg width="9" height="9" fill="none" aria-hidden="true"><path d="M1 3h5v5H1z" stroke="#fff" strokeWidth="2" /><path d="M3 0.500h5.500v6" stroke="#ddd" /></svg></button>
            <button type="button" aria-label="Close drawing"><svg width="8" height="8" aria-hidden="true"><path d="M1 0l6 8M7 0L1 8" stroke="#fff" strokeWidth="2" /></svg></button>
          </div>
          {/* view cube */}
          <div className="relative mt-3.5 grid h-[94px] w-[90px] grid-cols-[1fr_36px_1fr] grid-rows-[1fr_36px_1fr] place-items-center font-['Liberation_Sans',sans-serif] text-[15px] leading-4 font-bold text-[#b4b7ba]">
            <svg viewBox="0 0 90 94" className="absolute inset-0" aria-hidden="true"><circle cx="45" cy="47" r="37.500" fill="none" stroke="#474d53" strokeWidth="8" /></svg>
            <button type="button" className="relative col-start-2 self-start">N</button>
            <button type="button" className="relative col-start-1 row-start-2 justify-self-start">W</button>
            <button type="button" className="relative col-start-2 row-start-2 h-9 w-9 border border-[#b8b8b8] bg-[#a0a3a6] font-['Open_Sans',sans-serif] text-[9px] text-[#45494c]">TOP</button>
            <button type="button" className="relative col-start-3 row-start-2 justify-self-end">E</button>
            <button type="button" className="relative col-start-2 row-start-3 self-end">S</button>
          </div>
          <button type="button" className="mt-[13px] flex h-4 w-[46px] items-center justify-between rounded-sm border border-[#9da1ab] bg-[#878b95] px-1 text-[#4f535b]">
            WCS
            <svg width="5" height="3" viewBox="0 0 5 3" aria-hidden="true"><path d="M0 0h5L2.500 3z" fill="#9da1ab" /></svg>
          </button>
        </div>
      </div>
      <div className="absolute inset-y-0 right-0 w-[5px] bg-linear-to-r from-[#cfe0f2] to-[#9dbbdc]" />
    </main>
  )
}

/* ---------- status bar ---------- */

function LayoutTab({ name, width, active }: { name: string; width: string; active?: boolean }) {
  return (
    <button type="button" className={`relative h-[17px] leading-4 ${width} ${active ? 'z-10 font-bold text-white' : 'text-[#b0b0b0]'}`}>
      <TabShape flip from={active ? '6a6a6a' : '585858'} to={active ? '8a8a8a' : '5e5e5e'} />
      <span className="relative">{name}</span>
    </button>
  )
}

function StatusCell({ label, width, children, divider }: { label: string; width: string; children: ReactNode; divider?: boolean }) {
  return (
    <button type="button" aria-label={label} className={`flex h-full shrink-0 items-center justify-center ${width} ${divider ? 'border-r border-[#858585]' : ''}`}>
      {children}
    </button>
  )
}

function AnnoShape({ color, children }: { color: string; children?: ReactNode }) {
  return (
    <Ico>
      <path d="M7 1h2l1 6 5 5v2.500l-4-3.500H9.500L8 12.500 6.500 11H5l-4 3.500V12l5-5z" fill={color} />
      {children}
    </Ico>
  )
}

function StatusBar() {
  return (
    <footer className="flex h-[27px] items-start border-b border-black bg-[#383838] pl-3">
      <LayoutTab name="Model" width="w-[53px]" active />
      <LayoutTab name="Layout1" width="w-[60px]" />
      <LayoutTab name="Layout2" width="w-[62px]" />
      <button type="button" aria-label="New layout" className="ml-1 flex h-4 w-5 items-center justify-center rounded-br-lg rounded-bl-md bg-[#585858]">
        <svg width="8" height="8" aria-hidden="true"><path d="M4 0v8M0 4h8" stroke="#ddd" strokeWidth="2" /></svg>
      </button>
      <div className="ml-auto flex h-[26px] items-stretch border border-[#858585] bg-[#4a4a4a] text-white">
        <StatusCell label="Model space" width="w-[45px]" divider>MODEL</StatusCell>
        <StatusCell label="Grid" width="w-[23px]">
          <Ico><path d="M3.500 1v14M6.500 1v14M9.500 1v14M12.500 1v14" stroke="#aaa" /><path d="M1 3.500h14M1 6.500h14M1 9.500h14M1 12.500h14" stroke="#888" strokeDasharray="2 1" /></Ico>
        </StatusCell>
        <StatusCell label="Snap" width="w-[23px]">
          <Ico><path d="M2 2.500h13M2 5.500h13M2 8.500h13M2 11.500h13M2 14.500h13" stroke="#aaa" strokeDasharray="1 2" /></Ico>
        </StatusCell>
        <StatusCell label="Snap options" width="w-[15px]" divider><Caret /></StatusCell>
        <StatusCell label="Ortho" width="w-[25px]">
          <Ico><path d="M3.500 1v12.500H15M3.500 9.500h4v4" stroke="#3b8fe8" strokeWidth="1.500" /></Ico>
        </StatusCell>
        <StatusCell label="Polar" width="w-[22px]">
          <Ico><circle cx="7" cy="8" r="5.500" stroke="#b5b5b5" strokeWidth="1.500" /><path d="M7 8h8M7 8l4-4" stroke="#b5b5b5" strokeWidth="1.500" /></Ico>
        </StatusCell>
        <StatusCell label="Polar options" width="w-[14px]"><Caret /></StatusCell>
        <StatusCell label="Isometric" width="w-[23px]">
          <Ico><path d="M0 1l15 14M7.500 0v16M8 8l6-5" stroke="#a5a5a5" /></Ico>
        </StatusCell>
        <StatusCell label="Isometric options" width="w-[14px]" divider><Caret /></StatusCell>
        <StatusCell label="Object tracking" width="w-6">
          <Ico><path d="M14 2L2 13.500h13" stroke="#aaa" strokeWidth="1.500" /><path d="M6 8l3 3" stroke="#aaa" strokeWidth="2" /></Ico>
        </StatusCell>
        <StatusCell label="Object snap" width="w-[22px]">
          <Ico><path d="M3.500 3.500h11v11h-11z" stroke="#3b8fe8" strokeWidth="2" /><circle cx="3.500" cy="3.500" r="2.500" fill="#17a523" stroke="#083" /></Ico>
        </StatusCell>
        <StatusCell label="Object snap options" width="w-[15px]" divider><Caret /></StatusCell>
        <StatusCell label="Annotation visibility" width="w-[25px]">
          <AnnoShape color="#3b8fe8"><circle cx="11.500" cy="3.500" r="2.500" fill="#4a4a4a" stroke="#3b8fe8" strokeWidth="1.500" /></AnnoShape>
        </StatusCell>
        <StatusCell label="Auto scale" width="w-[23px]">
          <AnnoShape color="#b0b0b0"><path d="M13 1l-3 4h3l-3 4" stroke="#ccc" strokeWidth="1.500" /></AnnoShape>
        </StatusCell>
        <StatusCell label="Annotation" width="w-[21px]"><AnnoShape color="#b0b0b0" /></StatusCell>
        <StatusCell label="Annotation scale" width="w-[34px]" divider>
          <span className="mr-1 whitespace-nowrap">1:1</span>
          <Caret />
        </StatusCell>
        <StatusCell label="Workspace switching" width="w-[21px]">
          <Ico size={14}><circle cx="8" cy="8" r="3.500" stroke="#b8b8b8" strokeWidth="3" /><path d="M8 1v4M8 11v4M1 8h4M11 8h4M3 3l3 3M10 10l3 3M3 13l3-3M10 6l3-3" stroke="#b8b8b8" strokeWidth="2" /></Ico>
        </StatusCell>
        <StatusCell label="Workspace options" width="w-[17px]" divider><Caret /></StatusCell>
        <StatusCell label="Annotation monitor" width="w-[23px]" divider>
          <Ico size={14}><path d="M8 1v14M1 8h14" stroke="#c0c0c0" strokeWidth="2" /></Ico>
        </StatusCell>
        <StatusCell label="Isolate objects" width="w-[25px]" divider>
          <Ico><path d="M2 2h5v5H2zM7.500 9.500l3 5h-6z" stroke="#c0c0c0" /><circle cx="12" cy="7" r="2.500" stroke="#c0c0c0" /></Ico>
        </StatusCell>
        <StatusCell label="Hardware acceleration" width="w-[25px]" divider>
          <Ico><circle cx="8" cy="8" r="7" fill="#0b5fae" stroke="#2a8be0" /><path d="M7 10l5-4" stroke="#6fb7f2" /></Ico>
        </StatusCell>
        <StatusCell label="Clean screen notice" width="w-6" divider>
          <Ico><path d="M2 1h6v6H2z" fill="#d9edf8" /><path d="M5 4h8v6H5z" fill="#3f7fae" /><path d="M2 8h8v6H2z" fill="#e9de45" /><path d="M7 10l3 3 5-6" stroke="#4fc02d" strokeWidth="2.500" /></Ico>
        </StatusCell>
        <StatusCell label="Clean screen" width="w-[25px]">
          <Ico><path d="M1 2.500h14v11H1z" stroke="#ccc" strokeWidth="1.500" /><path d="M9 7l4-3M7 9l-4 3M10 4h3v2.500M6 12H3V9.500" stroke="#ccc" /></Ico>
        </StatusCell>
        <StatusCell label="Customization" width="w-[22px]">
          <Ico><path d="M1 3.500h14M1 8.500h14M1 13.500h14" stroke="#ccc" strokeWidth="1.500" /></Ico>
        </StatusCell>
      </div>
    </footer>
  )
}

export default function App() {
  return (
    <div className="flex min-h-screen flex-col overflow-hidden bg-[#383838] font-['Open_Sans','Noto_Sans',sans-serif] text-[11px] text-[#eeeeee]">
      <Header />
      <Ribbon />
      <DocTabs />
      <Viewport />
      <StatusBar />
    </div>
  )
}
